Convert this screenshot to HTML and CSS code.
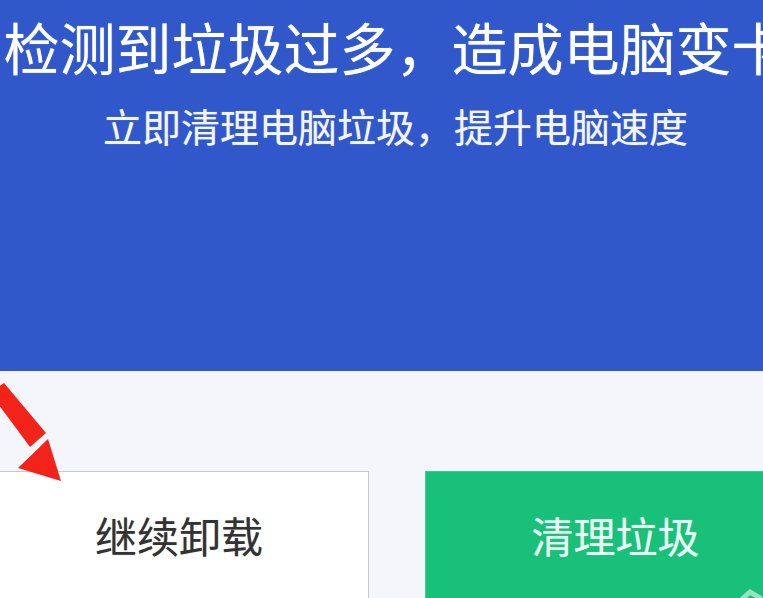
FILE: index.html
```html
<!DOCTYPE html>
<html lang="zh-CN">
<head>
<meta charset="utf-8">
<title>清理垃圾</title>
<link rel="stylesheet" href="styles.css">
</head>
<body>
<div class="page">
  <header class="hero">
    <div class="hero-inner">
      <h1 class="title">检测到垃圾过多，造成电脑变卡</h1>
      <p class="subtitle">立即清理电脑垃圾，提升电脑速度</p>
    </div>
  </header>
  <section class="actions">
    <div class="actions-inner">
      <button class="btn btn-ghost" type="button">继续卸载</button>
      <button class="btn btn-primary" type="button">清理垃圾
        <svg class="sparkle" width="40" height="20" viewBox="0 0 40 20" aria-hidden="true">
          <path d="M3 16 L12 8 L22 14" stroke="rgba(255,255,255,0.55)" stroke-width="5" stroke-linecap="round" fill="none"/>
        </svg>
      </button>
    </div>
    <svg class="arrow" width="80" height="120" viewBox="0 0 80 120" aria-hidden="true">
      <polygon points="-10,22 4,12 46,62 30,76" fill="#f2241a"/>
      <polygon points="61,110 48,68 18,97" fill="#f2241a"/>
    </svg>
  </section>
</div>
</body>
</html>
```

FILE: styles.css
```css
html, body {
  margin: 0;
  padding: 0;
}
body {
  width: 763px;
  height: 598px;
  overflow: hidden;
  font-family: "Noto Sans CJK SC", "Noto Sans", sans-serif;
  background: #f4f6fb;
}
.page {
  width: 763px;
  height: 598px;
  overflow: hidden;
  display: flex;
  flex-direction: column;
}
.hero {
  height: 371px;
  flex: none;
  background: #3058cb;
  color: #ffffff;
}
.hero-inner {
  width: 815px;
  margin-left: -12px;
  padding-top: 18px;
  text-align: center;
}
.title {
  margin: 0;
  font-size: 56px;
  line-height: 56px;
  font-weight: 400;
  white-space: nowrap;
  letter-spacing: 0;
  text-shadow: 0 0 1px rgba(255,255,255,0.6);
}
.subtitle {
  margin: 32px 0 0;
  font-size: 39px;
  line-height: 39px;
  font-weight: 400;
  white-space: nowrap;
  color: #f3f6ff;
  text-shadow: 0 0 1px rgba(255,255,255,0.5);
}
.actions {
  position: relative;
  flex: 1;
  background: #f4f6fb;
}
.actions-inner {
  width: 815px;
  margin-left: -10px;
  padding-top: 100px;
  display: flex;
  gap: 56px;
}
.btn {
  position: relative;
  flex: none;
  height: 150px;
  padding: 41px 0 0;
  box-sizing: border-box;
  font-family: "Noto Sans CJK SC", sans-serif;
  font-size: 42px;
  line-height: 44px;
  font-weight: 400;
  text-align: center;
  border: none;
  display: flex;
  justify-content: center;
  align-items: flex-start;
  overflow: hidden;
}
.btn-ghost {
  width: 379px;
  background: #ffffff;
  color: #333333;
  border-top: 1px solid #c8c8c8;
  border-right: 1px solid #c8c8c8;
  text-shadow: 0 0 1px rgba(0,0,0,0.3);
}
.btn-primary {
  width: 380px;
  background: #18c079;
  color: #e9fff4;
  border-top: 1px solid #2fd08c;
  border-left: 1px solid #3bd391;
  text-shadow: 0 0 1px rgba(255,255,255,0.5);
}
.sparkle {
  position: absolute;
  left: 312px;
  top: 112px;
}
.arrow {
  position: absolute;
  left: 0;
  top: 0;
}
```
